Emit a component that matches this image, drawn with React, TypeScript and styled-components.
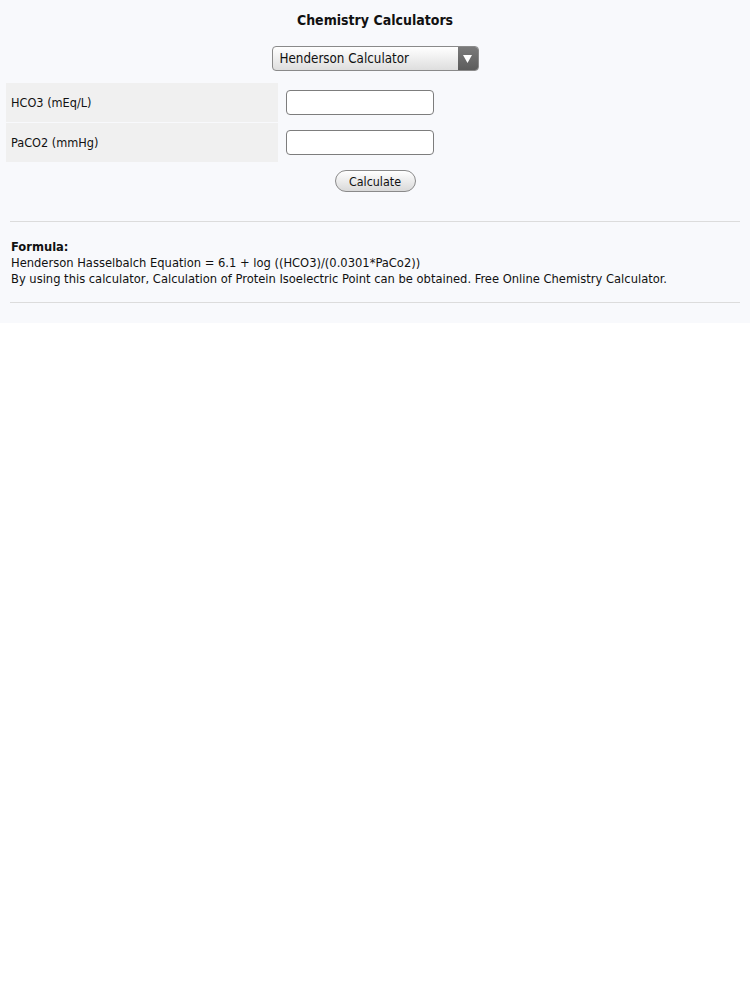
import React from "react";
import styled, {createGlobalStyle} from "styled-components";

const GlobalStyle = createGlobalStyle`
  body {
    margin: 0;
    background: #ffffff;
    font-family: "DejaVu Sans Condensed", "DejaVu Sans", Verdana, sans-serif;
    color: #111;
  }
`

const Page = styled.div`
  background: #f8f9fc;
  padding: 11px 0 20px;
`

const Title = styled.h1`
  margin: 0;
  text-align: center;
  font-size: 14px;
  font-weight: bold;
  line-height: 18px;
`

const SelectRow = styled.div`
  display: flex;
  justify-content: center;
  padding: 17px 0 12px;
`

const Select = styled.div`
  width: 205px;
  height: 23px;
  display: flex;
  border: 1px solid #8a8a8a;
  border-radius: 4px;
  overflow: hidden;
  background: linear-gradient(#ffffff, #dedede);
  font-size: 13.3px;
`

const SelectText = styled.div`
  flex: 1;
  padding-left: 7px;
  line-height: 23px;
`

const SelectArrow = styled.div`
  width: 20px;
  background: linear-gradient(#7a7a7a, #5c5c5c);
  display: flex;
  align-items: center;
  justify-content: center;
`

const Table = styled.div`
  display: grid;
  grid-template-columns: 272px 1fr;
  row-gap: 1px;
  padding: 0 6px;
`

const Label = styled.div`
  background: #f0f0f0;
  height: 39px;
  padding-left: 5px;
  display: flex;
  align-items: center;
  font-size: 12.6px;
`

const InputCell = styled.div`
  display: flex;
  align-items: center;
  padding-left: 8px;
`

const Input = styled.input`
  width: 148px;
  height: 25px;
  box-sizing: border-box;
  border: 1px solid #7d7d7d;
  border-radius: 4px;
  background: #fff;
`

const ButtonRow = styled.div`
  display: flex;
  justify-content: center;
  padding: 8px 0 0;
`

const Button = styled.button`
  width: 81px;
  height: 22px;
  border: 1px solid #8a8a8a;
  border-radius: 11px;
  background: linear-gradient(#ffffff, #d9d9d9);
  font-family: inherit;
  font-size: 12.4px;
  color: #111;
  padding: 0;
`

const Spacer = styled.div`
  height: 29px;
`

const Rule = styled.hr`
  border: none;
  border-top: 1px solid #dcdcdc;
  margin: 0 10px;
`

const Formula = styled.div`
  padding: 17px 11px 15px;
  font-size: 12.8px;
  line-height: 16px;

  & b {
    font-weight: bold;
  }
`

export default function App() {
    return (
        <>
            <GlobalStyle/>
            <Page>
                <Title>Chemistry Calculators</Title>
                <SelectRow>
                    <Select>
                        <SelectText>Henderson Calculator</SelectText>
                        <SelectArrow>
                            <svg width="9" height="8" viewBox="0 0 9 8">
                                <path d="M0 0 H9 L4.5 8 Z" fill="#fff"/>
                            </svg>
                        </SelectArrow>
                    </Select>
                </SelectRow>
                <Table>
                    <Label>HCO3 (mEq/L)</Label>
                    <InputCell><Input/></InputCell>
                    <Label>PaCO2 (mmHg)</Label>
                    <InputCell><Input/></InputCell>
                </Table>
                <ButtonRow>
                    <Button>Calculate</Button>
                </ButtonRow>
                <Spacer/>
                <Rule/>
                <Formula>
                    <b>Formula:</b><br/>
                    Henderson Hasselbalch Equation = 6.1 + log ((HCO3)/(0.0301*PaCo2))<br/>
                    By using this calculator, Calculation of Protein Isoelectric Point can be obtained. Free Online Chemistry Calculator.
                </Formula>
                <Rule/>
            </Page>
        </>
    )
}
